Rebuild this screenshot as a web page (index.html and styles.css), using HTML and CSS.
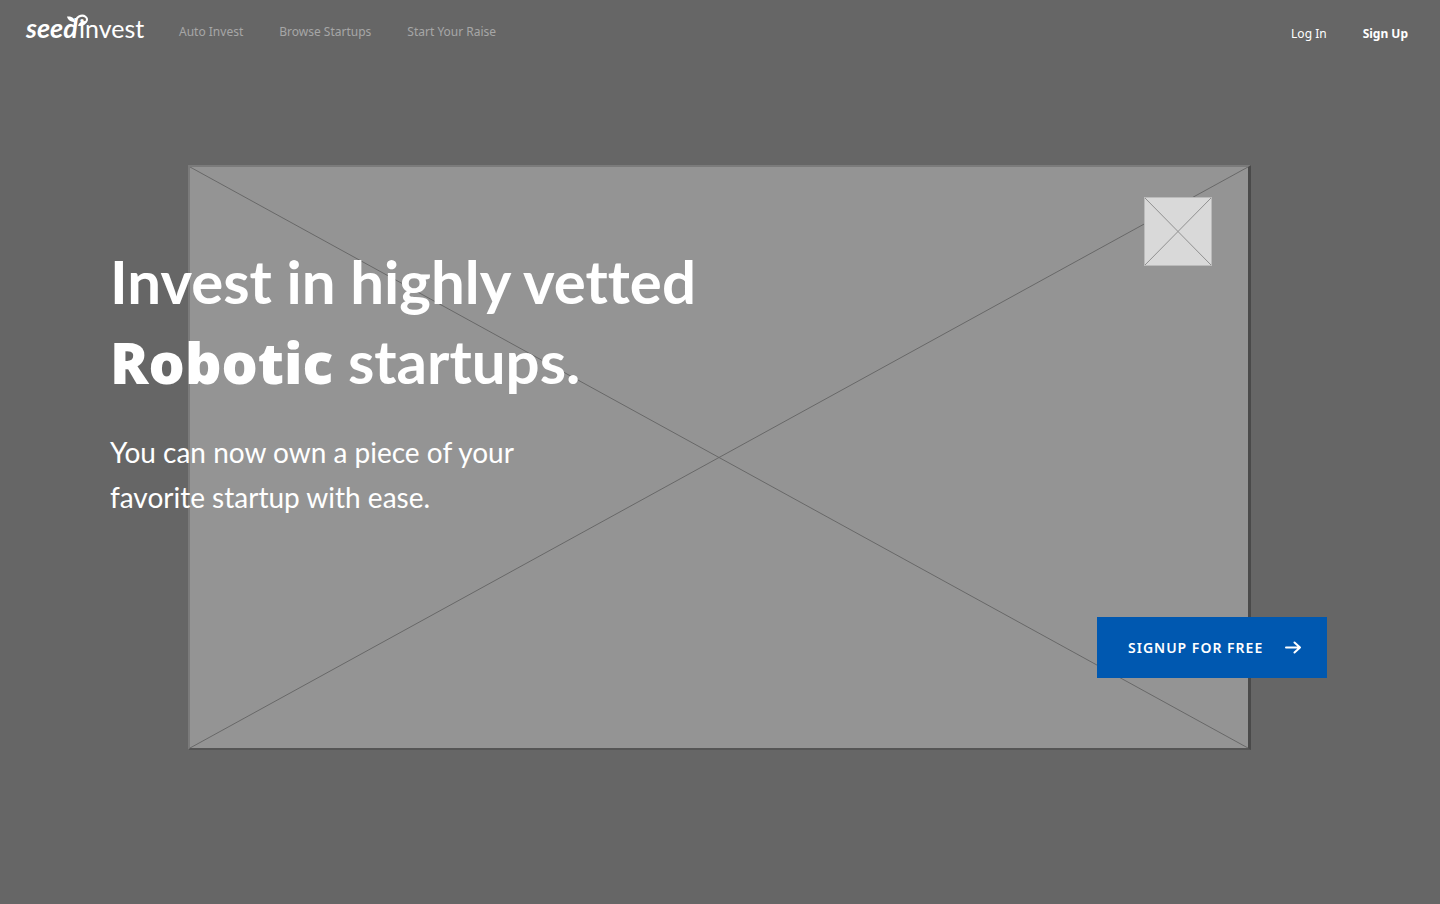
FILE: index.html
```html
<!DOCTYPE html>
<html lang="en">
<head>
<meta charset="utf-8">
<meta name="viewport" content="width=device-width, initial-scale=1">
<title>SeedInvest</title>
<link rel="stylesheet" href="styles.css">
</head>
<body>
<header class="topbar">
  <a class="logo" href="#" aria-label="seedinvest">
    <svg width="120" height="40" viewBox="0 0 120 40">
      <text class="logo-seed" x="1" y="30">seed</text>
      <text class="logo-invest" x="54" y="30">invest</text>
      <path class="sprout-stem" d="M50 19C50 14 51 10 54 8.500C59 6 64 10 61 14"/>
      <path class="sprout-leaf" d="M42 8.500c4-.5 7.500 1 8 5.500c-4 0-7-1.500-8-5.500zM53 18c1-4 4-5.500 9-5c-1 4-4 5.500-9 5z"/>
    </svg>
  </a>
  <nav class="nav">
    <a href="#">Auto Invest</a>
    <a href="#">Browse Startups</a>
    <a href="#">Start Your Raise</a>
  </nav>
  <nav class="account">
    <a href="#">Log In</a>
    <a class="strong" href="#">Sign Up</a>
  </nav>
</header>
<main class="hero">
  <div class="frame">
    <svg class="cross" viewBox="0 0 100 100" preserveAspectRatio="none" aria-hidden="true">
      <path d="M0 0L100 100M100 0L0 100"/>
    </svg>
    <div class="thumb">
      <svg class="cross" viewBox="0 0 100 100" preserveAspectRatio="none" aria-hidden="true">
        <path d="M0 0L100 100M100 0L0 100"/>
      </svg>
    </div>
  </div>
  <div class="copy">
    <h1>Invest in highly vetted<br><strong>Robotic</strong> startups.</h1>
    <p>You can now own a piece of your<br>favorite startup with ease.</p>
  </div>
  <button class="cta" type="button">
    <span>SIGNUP FOR FREE</span>
    <svg width="16" height="14" viewBox="0 0 16 14" aria-hidden="true"><path d="M1 6.500H15M9.500 1.500L15 6.500L9.500 11.500"/></svg>
  </button>
</main>
</body>
</html>
```
FILE: styles.css
```css
* { box-sizing: border-box; }
body {
  margin: 0;
  min-height: 100vh;
  background: #666;
  color: #fff;
  font-family: Lato, "Open Sans", sans-serif;
  font-variant-ligatures: none;
}
a { color: inherit; text-decoration: none; }
svg { display: block; }

.topbar {
  display: flex;
  align-items: center;
  height: 64px;
  padding: 0 32px 0 25px;
  font-family: "Noto Sans", sans-serif;
  font-size: 12px;
  line-height: 20px;
}
.logo { margin-right: 34px; margin-bottom: 8px; }
.logo text { fill: #fff; font-family: Lato, sans-serif; font-size: 25px; }
.logo .logo-seed { font-size: 27px; font-weight: 700; font-style: italic; }
.sprout-stem { fill: none; stroke: #fff; stroke-width: 2; stroke-linecap: round; }
.sprout-leaf { fill: #fff; }
.nav { display: flex; gap: 36px; color: #a6a6a6; }
.account { display: flex; gap: 36px; margin-left: auto; padding-top: 4px; }
.strong { font-weight: 700; }

.hero {
  display: grid;
  padding: 101px 113px 0 110px;
}
.hero > * { grid-area: 1 / 1; }
.frame {
  display: flex;
  justify-content: flex-end;
  align-items: flex-start;
  position: relative;
  margin: 0 76px 0 78px;
  padding: 30px 36px;
  aspect-ratio: 1063 / 585;
  background: #949494;
  border: 2px solid #7b7b7b;
  border-right: 3px solid #4a4a4a;
  border-bottom-color: #555;
}
.cross { width: 100%; height: 100%; fill: none; stroke: #686868; }
.cross path { vector-effect: non-scaling-stroke; }
.frame > .cross { position: absolute; inset: 0; }
.thumb {
  position: relative;
  width: 68px;
  height: 69px;
  background: #d9d9d9;
  border: 1px solid #bbb;
}
.thumb .cross { stroke: #909090; }
.copy { position: relative; justify-self: start; padding-top: 76px; }
h1 { margin: 0; font-size: 60px; line-height: 80px; font-weight: 700; }
h1 strong { font-family: "Noto Sans", sans-serif; font-size: 57px; line-height: 1; font-weight: 900; }
.copy p { margin: 29px 0 0; font-size: 28px; line-height: 45px; }
.cta {
  position: relative;
  display: flex;
  align-items: center;
  justify-content: space-between;
  align-self: end;
  justify-self: end;
  width: 230px;
  height: 61px;
  margin-bottom: 72px;
  padding: 0 26px 0 31px;
  border: 0;
  background: #0058b0;
  color: #fff;
  font: 600 14px/20px "Noto Sans", sans-serif;
  letter-spacing: 1px;
}
.cta svg { fill: none; stroke: #fff; stroke-width: 2; stroke-linecap: round; stroke-linejoin: round; }
```
